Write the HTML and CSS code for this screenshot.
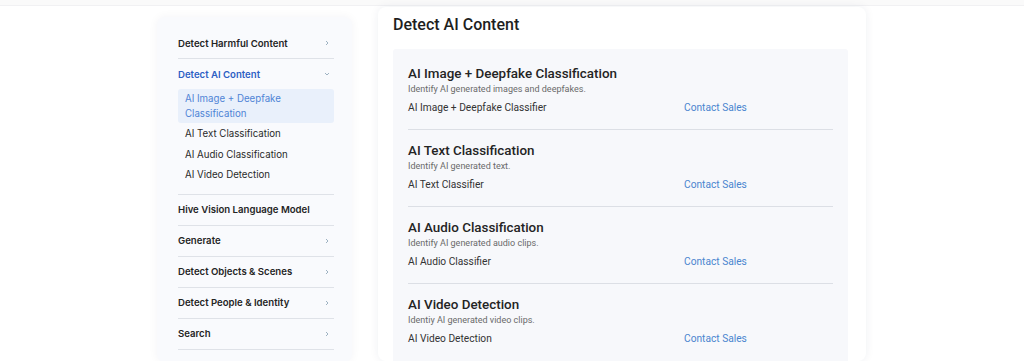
FILE: index.html
```html
<!DOCTYPE html>
<html>
	<head>
		<meta name="viewport" content="width=device-width, initial-scale=1" />
		<title>Detect AI Content</title>
		<link rel="stylesheet" href="styles.css">
	</head>
	<body>
		<div class="topbar"></div>
		<div class="page">
			<aside class="sidebar">
				<div class="navItem">
					<span>Detect Harmful Content</span>
					<svg class="chev" viewBox="0 0 6 8"><path d="M1.5 1 L4.5 4 L1.5 7" /></svg>
				</div>
				<div class="navGroup">
					<div class="navItem open">
						<span>Detect AI Content</span>
						<svg class="chev" viewBox="0 0 8 6"><path d="M1 1.5 L4 4.5 L7 1.5" /></svg>
					</div>
					<ul class="subList">
						<li class="active">AI Image + Deepfake Classification</li>
						<li>AI Text Classification</li>
						<li>AI Audio Classification</li>
						<li>AI Video Detection</li>
					</ul>
				</div>
				<div class="navItem">
					<span>Hive Vision Language Model</span>
				</div>
				<div class="navItem">
					<span>Generate</span>
					<svg class="chev" viewBox="0 0 6 8"><path d="M1.5 1 L4.5 4 L1.5 7" /></svg>
				</div>
				<div class="navItem">
					<span>Detect Objects &amp; Scenes</span>
					<svg class="chev" viewBox="0 0 6 8"><path d="M1.5 1 L4.5 4 L1.5 7" /></svg>
				</div>
				<div class="navItem">
					<span>Detect People &amp; Identity</span>
					<svg class="chev" viewBox="0 0 6 8"><path d="M1.5 1 L4.5 4 L1.5 7" /></svg>
				</div>
				<div class="navItem">
					<span>Search</span>
					<svg class="chev" viewBox="0 0 6 8"><path d="M1.5 1 L4.5 4 L1.5 7" /></svg>
				</div>
			</aside>

			<main class="content">
				<h2>Detect AI Content</h2>
				<div class="panel">
					<div class="product">
						<h3>AI Image + Deepfake Classification</h3>
						<p class="desc">Identify AI generated images and deepfakes.</p>
						<div class="row">
							<span class="model">AI Image + Deepfake Classifier</span>
							<a class="sales">Contact Sales</a>
						</div>
					</div>
					<div class="product">
						<h3>AI Text Classification</h3>
						<p class="desc">Identify AI generated text.</p>
						<div class="row">
							<span class="model">AI Text Classifier</span>
							<a class="sales">Contact Sales</a>
						</div>
					</div>
					<div class="product">
						<h3>AI Audio Classification</h3>
						<p class="desc">Identify AI generated audio clips.</p>
						<div class="row">
							<span class="model">AI Audio Classifier</span>
							<a class="sales">Contact Sales</a>
						</div>
					</div>
					<div class="product">
						<h3>AI Video Detection</h3>
						<p class="desc">Identiy AI generated video clips.</p>
						<div class="row">
							<span class="model">AI Video Detection</span>
							<a class="sales">Contact Sales</a>
						</div>
					</div>
				</div>
			</main>
		</div>
	</body>
</html>
```

FILE: styles.css
```css
html {
	font-family: Roboto, "Liberation Sans", sans-serif;
	color: #222;
}
body {
	margin: 0;
	background: #fff;
	height: 361px;
	overflow: hidden;
}
.topbar {
	height: 5px;
	background: #fafafa;
	border-bottom: 1px solid #f1f1f3;
}
.page {
	display: flex;
	align-items: flex-start;
	padding-left: 157px;
	gap: 26px;
}

/* sidebar */
.sidebar {
	width: 195px;
	box-sizing: border-box;
	margin-top: 11px;
	padding: 11px 18px 12px 21px;
	background: #f9fafd;
	border-radius: 8px;
	box-shadow: 0 0 10px rgba(30, 40, 80, 0.05);
	font-family: Inter, "Noto Sans", sans-serif;
}
.navItem {
	display: flex;
	align-items: center;
	justify-content: space-between;
	height: 30px;
	font-size: 9.6px;
	font-weight: 600;
	color: #242424;
	border-bottom: 1px solid #dfe2e8;
}
.navGroup {
	border-bottom: 1px solid #dfe2e8;
}
.navGroup .navItem {
	border-bottom: none;
}
.navItem.open {
	color: #2d5fc4;
}
.chev {
	width: 4px;
	height: 6px;
	margin-right: 5px;
	fill: none;
	stroke: #86a0b3;
	stroke-width: 1.2;
}
.navItem.open .chev {
	width: 6px;
	height: 4px;
	margin-right: 4px;
}
.subList {
	list-style: none;
	margin: 0;
	padding: 0 0 8px 0;
}
.subList li {
	font-size: 9.7px;
	line-height: 20.5px;
	padding: 0 7px;
	color: #2a2a2a;
}
.subList li.active {
	line-height: 15px;
	padding: 2px 39px 2px 7px;
	margin-bottom: 1px;
	width: 110px;
	background: #e9f0fb;
	color: #4f84d6;
	border-radius: 3px;
}

/* main */
.content {
	width: 488px;
	box-sizing: border-box;
	margin-top: 1px;
	padding: 8px 18px 0 15px;
	height: 354px;
	background: #fff;
	border-radius: 8px;
	box-shadow: 0 0 10px rgba(30, 40, 80, 0.07);
}
h2 {
	margin: 0 0 14px 0;
	font-size: 16px;
	line-height: 20px;
	font-weight: 500;
	color: #1e1e1e;
}
.panel {
	background: #f7f8fb;
	padding: 16px 15px 6px 15px;
	border-radius: 3px;
}
.product {
	padding: 12px 0 14px 0;
	border-bottom: 1px solid #dcdfe5;
}
.product:first-child {
	padding-top: 0;
}
.product:last-child {
	border-bottom: none;
}
h3 {
	margin: 0;
	font-size: 13.4px;
	line-height: 18px;
	font-weight: 500;
	color: #242424;
}
.desc {
	margin: 0;
	font-size: 9px;
	line-height: 12px;
	color: #6a6a6a;
}
.row {
	display: flex;
	margin-top: 6px;
	font-size: 10.2px;
	line-height: 14px;
}
.model {
	width: 276px;
	color: #333;
}
.sales {
	color: #4a85cf;
	cursor: pointer;
}
```
